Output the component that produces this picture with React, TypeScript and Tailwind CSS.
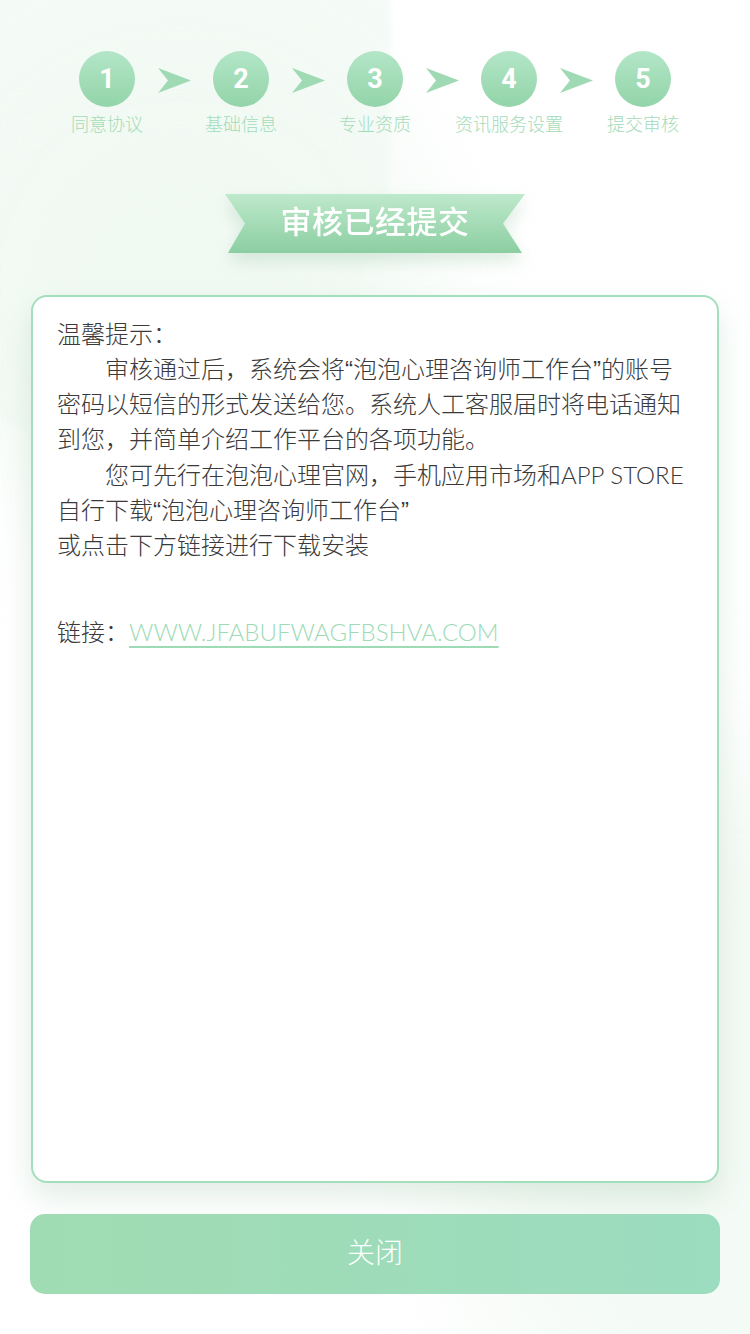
const steps = ['同意协议', '基础信息', '专业资质', '资讯服务设置', '提交审核']

function Arrow() {
  return (
    <svg width="33" height="25" viewBox="0 0 33 25" className="mx-[22.5px] mt-[17px] shrink-0">
      <path d="M0 0 L33 12.5 L0 25 L10 12.5 Z" fill="#9fdab4" />
    </svg>
  )
}

function Steps() {
  return (
    <div className="flex items-start justify-center">
      {steps.map((label, i) => (
        <div key={label} className="flex items-start">
          {i > 0 && <Arrow />}
          <div className="flex w-[56px] flex-col items-center">
            <div className="flex h-[56px] w-[56px] items-center justify-center rounded-full bg-gradient-to-b from-[#b3e6c7] to-[#93d4a9] font-['Roboto',sans-serif] text-[27px] font-bold text-white">
              {i + 1}
            </div>
            <div className="mt-[6px] whitespace-nowrap text-[18px] font-light leading-[24px] text-[#a4dbb9]">{label}</div>
          </div>
        </div>
      ))}
    </div>
  )
}

function Banner() {
  return (
    <div className="mt-[57px] flex justify-center drop-shadow-[0_8px_8px_rgba(120,180,140,0.25)]">
      <div className="flex h-[59px] w-[300px] items-center justify-center bg-gradient-to-b from-[#bee9cc] to-[#8bcea1] [clip-path:polygon(0_0,100%_0,calc(100%-22px)_50%,99%_100%,1%_100%,20px_50%)]">
        <span className="text-[31px] font-medium tracking-[0.5px] text-white">审核已经提交</span>
      </div>
    </div>
  )
}

export default function App() {
  return (
    <div className="relative h-[1334px] w-[750px] overflow-hidden bg-white font-['Liberation_Sans','Noto_Sans_CJK_SC',sans-serif] text-[#3a3a3a]">
      {/* soft background blobs */}
      <div className="pointer-events-none absolute inset-0">
        <div className="absolute -left-[180px] -top-[280px] h-[720px] w-[570px] rounded-full bg-[#f5fbf7] blur-[3px]" />
        <div className="absolute -left-[60px] top-[40px] h-[480px] w-[480px] rounded-full bg-[#f1f9f3] blur-3xl" />
        <div className="absolute left-[460px] top-[760px] h-[700px] w-[560px] rounded-full bg-[#f4faf5] blur-3xl" />
      </div>

      <div className="relative flex flex-col items-center pt-[51px]">
        <Steps />
        <Banner />

        <div className="mt-[42px] h-[888px] w-[688px] rounded-[16px] border-2 border-[#a3dfbb] bg-white px-[24px] pt-[20px] text-[24px] font-light leading-[35px] shadow-[0_14px_30px_rgba(110,170,130,0.2)]">
          <p className="whitespace-nowrap">温馨提示：</p>
          <p className="whitespace-nowrap pl-[48px]">审核通过后，系统会将“泡泡心理咨询师工作台”的账号</p>
          <p className="whitespace-nowrap">密码以短信的形式发送给您。系统人工客服届时将电话通知</p>
          <p className="whitespace-nowrap">到您，并简单介绍工作平台的各项功能。</p>
          <p className="whitespace-nowrap pl-[48px]">
            您可先行在泡泡心理官网，手机应用市场和<span className="font-['Lato',sans-serif]">APP STORE</span>
          </p>
          <p className="whitespace-nowrap">自行下载“泡泡心理咨询师工作台”</p>
          <p className="whitespace-nowrap">或点击下方链接进行下载安装</p>
          <p className="mt-[51px] whitespace-nowrap">
            链接：
            <a className="font-['Lato',sans-serif] text-[#9ddbb5] underline decoration-[#9ddbb5] decoration-[1.5px] underline-offset-[5px]">
              WWW.JFABUFWAGFBSHVA.COM
            </a>
          </p>
        </div>

        <button className="mt-[31px] flex h-[80px] w-[690px] items-center justify-center rounded-[15px] bg-gradient-to-r from-[#a0dcb3] to-[#9cdcbf] text-[28px] font-light text-white">
          关闭
        </button>
      </div>
    </div>
  )
}
